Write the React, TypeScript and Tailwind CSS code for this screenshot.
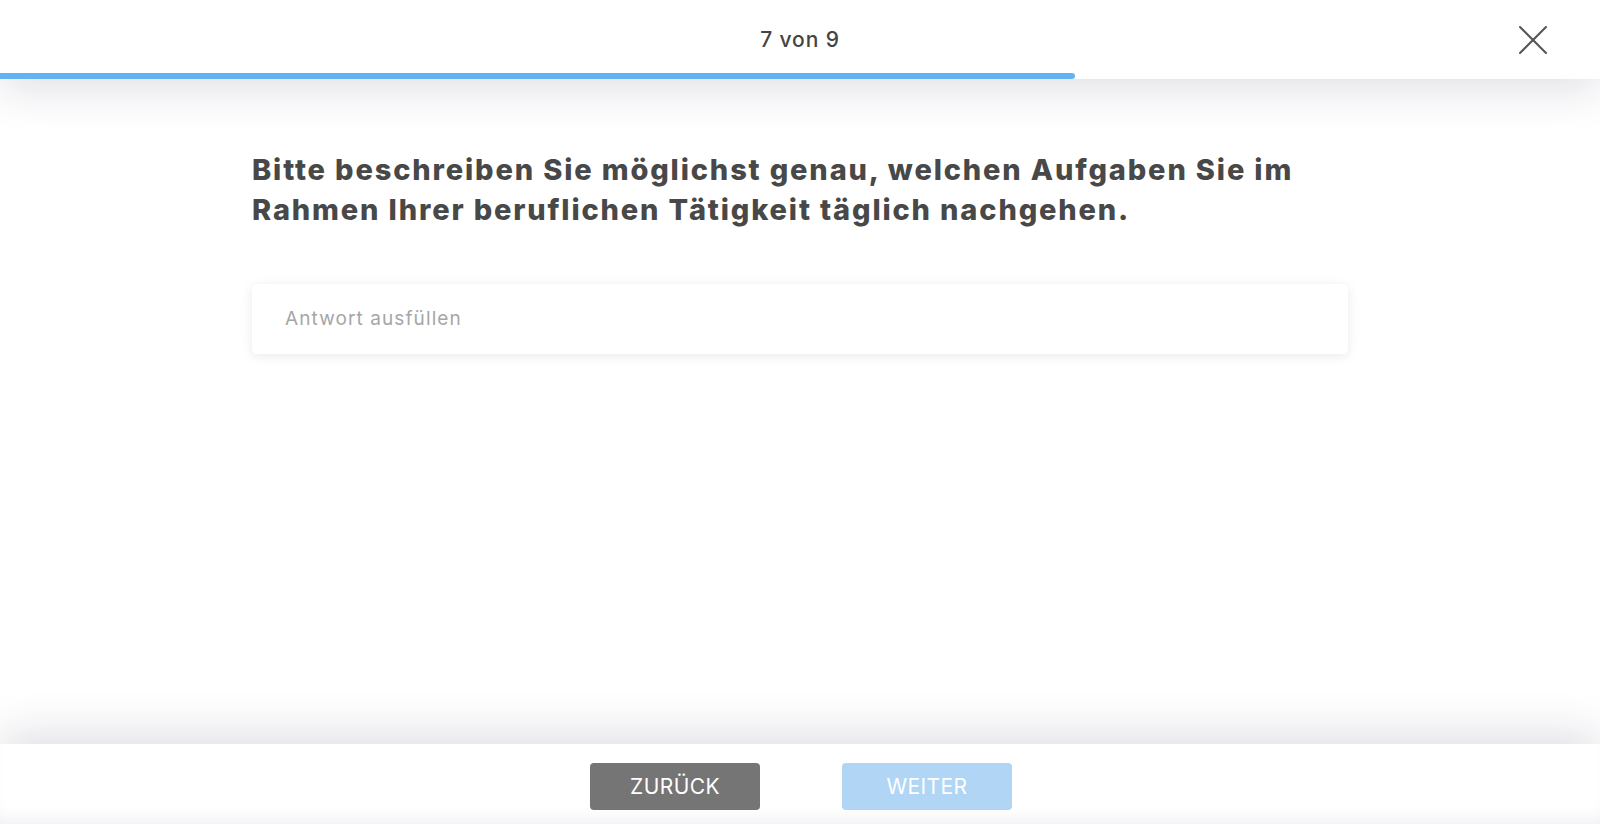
const font = { fontFamily: 'Inter, "Noto Sans", sans-serif' };

function CloseIcon() {
  return (
    <svg width="28" height="28" viewBox="0 0 28 28" fill="none" stroke="currentColor" strokeWidth="2" strokeLinecap="round">
      <line x1="1" y1="1" x2="27" y2="27" />
      <line x1="27" y1="1" x2="1" y2="27" />
    </svg>
  );
}

export default function App() {
  const step = 7;
  const total = 9;
  const progress = 67.2;

  return (
    <div style={font} className="h-screen w-full flex flex-col bg-white overflow-hidden text-[#474747]">
      <header className="relative z-10 bg-white shadow-[0_10px_45px_rgba(30,30,70,0.14)]">
        <div className="relative h-[73px] flex items-center justify-center pt-[6px]">
          <span className="text-[21px] font-medium tracking-[0.9px] text-[#444]">
            {step} von {total}
          </span>
          <button className="absolute right-[53px] top-[26px] text-[#555]">
            <CloseIcon />
          </button>
        </div>
        <div className="h-[6px] w-full">
          <div className="h-full bg-[#63b3f4] rounded-r-full" style={{ width: `${progress}%` }} />
        </div>
      </header>

      <main className="flex-1 bg-white">
        <div className="w-[1096px] mx-auto pt-[71px]">
          <h1 className="text-[29px] leading-[40px] font-extrabold text-[#484848] tracking-[1.85px]">
            Bitte beschreiben Sie möglichst genau, welchen Aufgaben Sie im Rahmen Ihrer beruflichen Tätigkeit täglich nachgehen.
          </h1>
          <div className="mt-[54px] h-[70px] bg-white rounded-[5px] shadow-[0_2px_12px_rgba(0,0,0,0.09)] flex items-center px-[33px]">
            <input
              type="text"
              placeholder="Antwort ausfüllen"
              className="w-full bg-transparent outline-none text-[19px] tracking-[1.1px] text-[#474747] placeholder:text-[#a6a6a6]"
            />
          </div>
        </div>
      </main>

      <footer className="relative z-10 h-[80px] bg-white shadow-[0_-10px_45px_rgba(30,30,70,0.14),inset_0_-14px_20px_-14px_rgba(30,30,70,0.1)] flex justify-center gap-[82px] pt-[19px] pl-[2px]">
        <button className="w-[170px] h-[47px] rounded-[4px] bg-[#757575] text-white text-[21px] tracking-[0.4px] uppercase">
          Zurück
        </button>
        <button disabled className="w-[170px] h-[47px] rounded-[4px] bg-[#b0d5f5] text-white text-[21px] tracking-[0.4px] uppercase">
          Weiter
        </button>
      </footer>
    </div>
  );
}
